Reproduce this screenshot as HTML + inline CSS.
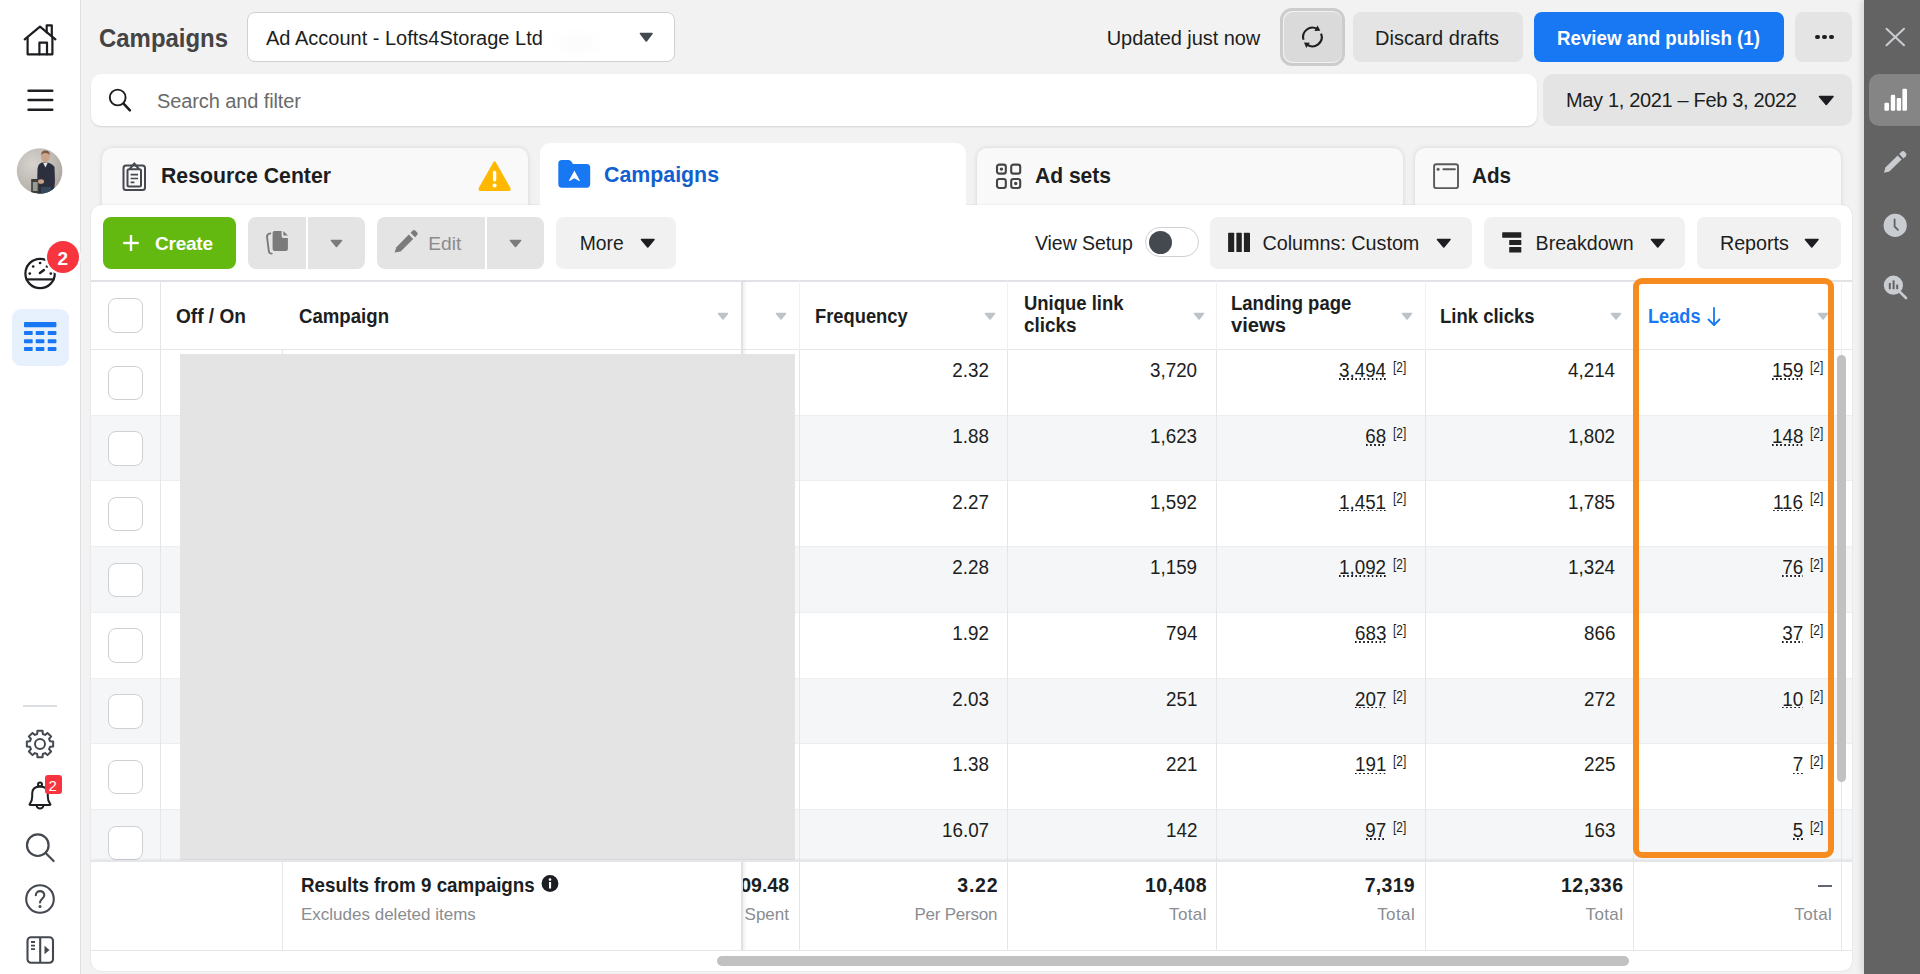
<!DOCTYPE html><html><head><meta charset="utf-8"><style>
html,body{margin:0;padding:0;}
body{width:1920px;height:974px;overflow:hidden;position:relative;background:#f2f2f2;font-family:"Liberation Sans",sans-serif;}
.t{position:absolute;white-space:nowrap;}
</style></head><body>
<div style="position:absolute;left:0px;top:0px;width:81px;height:974px;background:#ffffff;border-right:1px solid #dddfe2;box-sizing:border-box;"></div>
<svg style="position:absolute;left:20px;top:20px" width="40" height="40" viewBox="0 0 40 40"><g fill="none" stroke="#1c1e21" stroke-width="2.2" stroke-linejoin="round" stroke-linecap="round"><path d="M4.7 19.4 L20 6.7 L35.4 19.4"/><path d="M7.6 18 V34.3 H32.4 V18"/><path d="M19.4 34.3 V22.7 H27 V34.3"/><path d="M26.7 12.5 V5.4 H31.8 V16.5"/></g></svg>
<svg style="position:absolute;left:24px;top:86px" width="32" height="28" viewBox="0 0 32 28"><g stroke="#1c1e21" stroke-width="2.6" stroke-linecap="round"><path d="M4.6 4.7 H28.2"/><path d="M4.6 14 H28.2"/><path d="M4.6 23.8 H28.2"/></g></svg>
<svg style="position:absolute;left:16px;top:147px" width="48" height="48" viewBox="0 0 48 48"><defs><clipPath id="avc"><circle cx="23.6" cy="24" r="22.8"/></clipPath><radialGradient id="avg" cx="0.35" cy="0.35" r="0.8"><stop offset="0" stop-color="#d6d2cd"/><stop offset="0.6" stop-color="#bcb7b1"/><stop offset="1" stop-color="#a39d97"/></radialGradient></defs><g clip-path="url(#avc)"><rect width="48" height="48" fill="url(#avg)"/><path d="M21 48 L21.5 22 Q22 15.5 28 15.2 Q35.5 15.2 38.5 20 L39 34 Q38.5 42 37 48 Z" fill="#2c2f3d"/><path d="M27 15.8 L29.5 20.5 L31.8 15.6 Z" fill="#e6e6e6"/><ellipse cx="29.4" cy="9.6" rx="4.3" ry="5.6" fill="#c9a48a"/><path d="M25 8 Q25.5 3.2 29.5 3.4 Q33.8 3.4 33.8 8 Q32 5.8 29.4 6 Q26.8 5.8 25 8 Z" fill="#7b5a44"/><rect x="15.2" y="32" width="8" height="14" fill="#3a3d3a"/><rect x="16.8" y="35" width="4.8" height="9" fill="#9a9a94"/><ellipse cx="25" cy="34.5" rx="3" ry="2.3" fill="#c9a48a"/><rect x="25" y="40" width="10" height="8" fill="#34495e"/></g></svg>
<svg style="position:absolute;left:20px;top:253px" width="40" height="40" viewBox="0 0 40 40"><g fill="none" stroke="#1c1e21" stroke-width="2.2"><circle cx="20.1" cy="20.5" r="14.7"/><path d="M5.8 26.4 H34.4"/><path d="M19.9 20 L23.9 17" stroke-linecap="round" stroke-width="2.4"/></g><g fill="#1c1e21"><circle cx="9.8" cy="20.6" r="1.35"/><circle cx="13.2" cy="13.5" r="1.35"/><circle cx="20.1" cy="10" r="1.35"/><circle cx="27" cy="13.5" r="1.35"/><circle cx="30.8" cy="20.6" r="1.35"/></g></svg>
<div style="position:absolute;left:46.8px;top:241.2px;width:32px;height:32px;border-radius:50%;background:#f8353f;box-shadow:0 0 0 2px #fff;"></div>
<div class="t" style="left:57.5px;top:249.42px;font-size:19px;line-height:19px;font-weight:700;color:#ffffff;">2</div>
<div style="position:absolute;left:12px;top:309px;width:57px;height:57px;background:#e7f0fd;border-radius:9px;"></div>
<svg style="position:absolute;left:24px;top:322px" width="33" height="30" viewBox="0 0 33 30"><g fill="#1877f2"><rect x="0" y="0" width="32.4" height="5.2" rx="1"/><rect x="0" y="9" width="8.7" height="4.1" rx="0.8"/><rect x="11.7" y="9" width="8.7" height="4.1" rx="0.8"/><rect x="23.7" y="9" width="8.7" height="4.1" rx="0.8"/><rect x="0" y="17.2" width="8.7" height="4.1" rx="0.8"/><rect x="11.7" y="17.2" width="8.7" height="4.1" rx="0.8"/><rect x="23.7" y="17.2" width="8.7" height="4.1" rx="0.8"/><rect x="0" y="25" width="8.7" height="4.1" rx="0.8"/><rect x="11.7" y="25" width="8.7" height="4.1" rx="0.8"/><rect x="23.7" y="25" width="8.7" height="4.1" rx="0.8"/></g></svg>
<div style="position:absolute;left:23px;top:705px;width:34px;height:2px;background:#dadde1;"></div>
<svg style="position:absolute;left:20px;top:724px" width="40" height="40" viewBox="0 0 40 40"><g fill="none" stroke="#444950" stroke-width="2" stroke-linejoin="round"><path d="M17.22 9.98 L17.44 6.85 L22.56 6.85 L22.78 9.98 L25.12 10.95 L27.49 8.89 L31.11 12.51 L29.05 14.88 L30.02 17.22 L33.15 17.44 L33.15 22.56 L30.02 22.78 L29.05 25.12 L31.11 27.49 L27.49 31.11 L25.12 29.05 L22.78 30.02 L22.56 33.15 L17.44 33.15 L17.22 30.02 L14.88 29.05 L12.51 31.11 L8.89 27.49 L10.95 25.12 L9.98 22.78 L6.85 22.56 L6.85 17.44 L9.98 17.22 L10.95 14.88 L8.89 12.51 L12.51 8.89 L14.88 10.95 Z"/><circle cx="20" cy="20" r="5"/></g></svg>
<svg style="position:absolute;left:20px;top:776px" width="40" height="40" viewBox="0 0 40 40"><g fill="none" stroke="#1c1e21" stroke-width="2" stroke-linejoin="round"><path d="M10 27.6 Q12.2 25 12.2 20.5 L12.2 17.6 Q12.2 10.6 20 10.6 Q27.8 10.6 27.8 17.6 L27.8 20.5 Q27.8 25 30 27.6 Q31.2 29 29.4 29 L10.6 29 Q8.8 29 10 27.6 Z"/><path d="M16.6 29.2 A3.4 3.4 0 0 0 23.4 29.2"/><circle cx="20" cy="8.6" r="2"/></g></svg>
<div style="position:absolute;left:45px;top:774.5px;width:16.5px;height:19.5px;background:#f8353f;border-radius:3px;"></div>
<div class="t" style="left:48.6px;top:777.60px;font-size:15px;line-height:15px;color:#ffffff;">2</div>
<svg style="position:absolute;left:20px;top:828px" width="40" height="40" viewBox="0 0 40 40"><g fill="none" stroke="#444950" stroke-width="2.2" stroke-linecap="round"><circle cx="17.8" cy="17.2" r="10.8"/><path d="M25.6 25 L33.6 33"/></g></svg>
<svg style="position:absolute;left:20px;top:879px" width="40" height="40" viewBox="0 0 40 40"><g fill="none" stroke="#444950" stroke-width="2.1"><circle cx="20" cy="20" r="13.8"/><path d="M15.8 16.3 C15.8 10.8 24.3 10.8 24.3 16.2 C24.3 19.6 20 19.8 20 23.4" stroke-linecap="round"/></g><circle cx="20" cy="27.6" r="1.5" fill="#444950"/></svg>
<svg style="position:absolute;left:20px;top:930px" width="40" height="40" viewBox="0 0 40 40"><g fill="none" stroke="#444950" stroke-width="2.1"><rect x="7.5" y="7.3" width="25.5" height="25.5" rx="3.5"/><path d="M20.2 7.3 V32.8"/><path d="M11 12 H15 M11 15.6 H15 M11 19.2 H15" stroke-width="1.8"/></g><path d="M24.5 15.7 L29.5 20 L24.5 24.3 Z" fill="#444950"/></svg>
<div class="t" style="left:99px;top:24.79px;font-size:26px;line-height:26px;font-weight:700;color:#444444;transform:scaleX(0.9207);transform-origin:left center;">Campaigns</div>
<div style="position:absolute;left:247px;top:12px;width:428px;height:49.5px;background:#fff;border:1px solid #ced0d4;border-radius:8px;box-sizing:border-box;"></div>
<div class="t" style="left:266px;top:28.07px;font-size:20px;line-height:20px;color:#1c1e21;">Ad Account - Lofts4Storage Ltd</div>
<div style="position:absolute;left:548px;top:26px;width:60px;height:34px;border-radius:50%;background:radial-gradient(ellipse,#fbfbfb 0%,rgba(255,255,255,0) 70%);"></div>
<svg style="position:absolute;left:638.75px;top:32px" width="14.5" height="10.5" viewBox="0 0 14.5 10.5"><path d="M1.5 1.5 L13.0 1.5 L7.25 9.0 Z" fill="#444950" stroke="#444950" stroke-width="1.6" stroke-linejoin="round"/></svg>
<div class="t" style="left:1106.7px;top:28.27px;font-size:20px;line-height:20px;color:#1c1e21;letter-spacing:-0.064px;">Updated just now</div>
<div style="position:absolute;left:1280px;top:7.5px;width:65px;height:58.5px;border:3px solid #cccccc;border-radius:12px;box-sizing:border-box;background:#f2f2f2;"></div>
<div style="position:absolute;left:1283.5px;top:11.5px;width:58.0px;height:50.5px;background:#dadada;border-radius:9px;"></div>
<svg style="position:absolute;left:1297px;top:22px" width="31" height="31" viewBox="0 0 31 31"><g fill="none" stroke="#1c1e21" stroke-width="2.1"><path d="M6.51 17.72 A9.3 9.3 0 0 1 20.05 6.95"/><path d="M24.08 11.67 A9.3 9.3 0 0 1 10.07 22.62"/></g><path d="M23.32 8.84 L20.53 3.59 L17.38 9.04 Z M6.97 20.45 L9.29 25.92 L12.90 20.76 Z" fill="#1c1e21"/></svg>
<div style="position:absolute;left:1353px;top:12px;width:169.5999999999999px;height:50px;background:#e4e4e4;border-radius:8px;"></div>
<div class="t" style="left:1375px;top:28.27px;font-size:20px;line-height:20px;color:#1c1e21;letter-spacing:0.048px;">Discard drafts</div>
<div style="position:absolute;left:1534px;top:12px;width:249.70000000000005px;height:50px;background:#1877f2;border-radius:8px;"></div>
<div class="t" style="left:1557px;top:28.19px;font-size:20.1px;line-height:20.1px;font-weight:700;color:#ffffff;transform:scaleX(0.9325);transform-origin:left center;">Review and publish (1)</div>
<div style="position:absolute;left:1795px;top:12px;width:57px;height:50px;background:#e4e4e4;border-radius:8px;"></div>
<div style="position:absolute;left:1815px;top:34.5px;width:4.6px;height:4.6px;border-radius:50%;background:#1c1e21;box-shadow:7px 0 0 #1c1e21,14px 0 0 #1c1e21"></div>
<div style="position:absolute;left:91px;top:74px;width:1446px;height:52px;background:#fff;border-radius:10px;box-shadow:0 1px 2px rgba(0,0,0,0.12);"></div>
<svg style="position:absolute;left:104px;top:84px" width="32" height="32" viewBox="0 0 32 32"><g fill="none" stroke="#1c1e21" stroke-linecap="round"><circle cx="13.7" cy="13.5" r="7.9" stroke-width="1.9"/><path d="M19.6 19.6 L25.9 26.4" stroke-width="2.5"/></g></svg>
<div class="t" style="left:157px;top:90.57px;font-size:20px;line-height:20px;color:#6a6a6a;letter-spacing:-0.104px;">Search and filter</div>
<div style="position:absolute;left:1542.5px;top:74px;width:309.5px;height:51.5px;background:#e4e4e4;border-radius:10px;"></div>
<div class="t" style="left:1566px;top:89.87px;font-size:20px;line-height:20px;color:#1c1e21;letter-spacing:-0.339px;">May 1, 2021 – Feb 3, 2022</div>
<svg style="position:absolute;left:1817.75px;top:95.3px" width="16.5" height="11" viewBox="0 0 16.5 11"><path d="M1.5 1.5 L15.0 1.5 L8.25 9.5 Z" fill="#1c1e21" stroke="#1c1e21" stroke-width="1.6" stroke-linejoin="round"/></svg>
<div style="position:absolute;left:1864px;top:0px;width:56px;height:974px;background:#636363;box-shadow:-3px 0 6px rgba(0,0,0,0.10);"></div>
<svg style="position:absolute;left:1883px;top:25px" width="24" height="24" viewBox="0 0 24 24"><g stroke="#c9ccd1" stroke-width="2" stroke-linecap="round"><path d="M3.5 3.7 L21 20.3"/><path d="M21 3.7 L3.5 20.3"/></g></svg>
<div style="position:absolute;left:1869px;top:74px;width:61px;height:51.5px;background:#858585;border-radius:10px;"></div>
<svg style="position:absolute;left:1880px;top:84px" width="32" height="32" viewBox="0 0 32 32"><g fill="#ffffff"><rect x="4.4" y="18.8" width="4.6" height="8" rx="1.2"/><rect x="10.8" y="10.8" width="4.4" height="16" rx="1.2"/><rect x="16.7" y="14" width="4.4" height="12.8" rx="1.2"/><rect x="22.4" y="4.8" width="4.6" height="22" rx="1.2"/></g></svg>
<svg style="position:absolute;left:1880px;top:146px" width="32" height="32" viewBox="0 0 32 32"><g fill="#c9ccd1"><path d="M4 26.8 L5.4 21.6 L17.6 9.6 L21.6 13.6 L9.4 25.6 Z"/><path d="M19.2 8 L21.4 5.8 Q23 4.4 24.6 5.8 L25.8 7 Q27.2 8.6 25.8 10.2 L23.4 12.4 Z"/></g></svg>
<svg style="position:absolute;left:1880px;top:210px" width="32" height="32" viewBox="0 0 32 32"><circle cx="15.2" cy="15.4" r="11.6" fill="#c9ccd1"/><path d="M14.6 9.5 V16.5 L18 19.8" fill="none" stroke="#636363" stroke-width="1.8" stroke-linecap="round"/></svg>
<svg style="position:absolute;left:1880px;top:271px" width="32" height="32" viewBox="0 0 32 32"><circle cx="13.4" cy="14.2" r="9.6" fill="#c9ccd1"/><path d="M19.8 20.8 L26 27" stroke="#c9ccd1" stroke-width="2.6" stroke-linecap="round"/><g fill="#636363"><rect x="8.8" y="12" width="2" height="6.2"/><rect x="12.6" y="9.4" width="2" height="8.8"/><rect x="16.2" y="13.6" width="2" height="4.6"/></g></svg>
<div style="position:absolute;left:102px;top:148px;width:426px;height:67px;background:#f9f9f9;border-radius:10px 10px 0 0;box-shadow:0 0 5px rgba(0,0,0,0.12);"></div>
<div style="position:absolute;left:977px;top:148px;width:426px;height:67px;background:#f9f9f9;border-radius:10px 10px 0 0;box-shadow:0 0 5px rgba(0,0,0,0.12);"></div>
<div style="position:absolute;left:1415px;top:148px;width:426px;height:67px;background:#f9f9f9;border-radius:10px 10px 0 0;box-shadow:0 0 5px rgba(0,0,0,0.12);"></div>
<div style="position:absolute;left:91px;top:205px;width:1761px;height:766px;background:#ffffff;border-radius:10px;box-shadow:0 0 2px rgba(0,0,0,0.12);"></div>
<div style="position:absolute;left:540px;top:143px;width:426px;height:72px;background:#ffffff;border-radius:10px 10px 0 0;"></div>
<svg style="position:absolute;left:118px;top:158px" width="32" height="36" viewBox="0 0 32 36"><g fill="none" stroke="#444950" stroke-width="2"><rect x="5.5" y="7.5" width="21.5" height="24.5" rx="2.5"/><rect x="9.5" y="11.3" width="13.5" height="17.2" rx="1.5"/><path d="M11.7 11 L16.3 5.6 L20.9 11"/></g><g stroke="#444950" stroke-width="1.7"><path d="M12.6 16.6 H20 M12.6 20.5 H20 M12.6 24.3 H16.4"/></g></svg>
<div class="t" style="left:160.8px;top:165.17px;font-size:22.6px;line-height:22.6px;font-weight:700;color:#1c1e21;transform:scaleX(0.9403);transform-origin:left center;">Resource Center</div>
<svg style="position:absolute;left:476px;top:158px" width="37" height="36" viewBox="0 0 37 36"><path d="M18.6 4.6 L33.2 30.4 Q33.8 31.8 32.3 31.8 L4.9 31.8 Q3.4 31.8 4 30.4 Z" fill="#ffb800" stroke="#ffb800" stroke-width="2.6" stroke-linejoin="round"/><rect x="16.9" y="12.8" width="3.4" height="10.6" rx="1.7" fill="#fff"/><circle cx="18.6" cy="27.4" r="2" fill="#fff"/></svg>
<svg style="position:absolute;left:556px;top:157px" width="37" height="34" viewBox="0 0 37 34"><path d="M2.3 6.5 Q2.3 2.9 5.9 2.9 L12.6 2.9 Q14.4 2.9 15.4 4.4 L17 6.9 L30.6 6.9 Q34.2 6.9 34.2 10.5 L34.2 27.1 Q34.2 30.7 30.6 30.7 L5.9 30.7 Q2.3 30.7 2.3 27.1 Z" fill="#1877f2"/><path d="M18.4 13.6 L23.8 23.6 Q23.9 24.2 23.2 23.9 L18.4 21.2 L13.6 23.9 Q12.9 24.2 13 23.6 Z" fill="#fff"/></svg>
<div class="t" style="left:603.5px;top:162.70px;font-size:22.8px;line-height:22.8px;font-weight:700;color:#1160cf;transform:scaleX(0.9361);transform-origin:left center;">Campaigns</div>
<svg style="position:absolute;left:993px;top:160px" width="32" height="32" viewBox="0 0 32 32"><g fill="none" stroke="#454545" stroke-width="2.1"><rect x="4" y="4.6" width="8.8" height="9" rx="2.2"/><rect x="18.2" y="4.6" width="9" height="9" rx="2.2"/><rect x="4" y="19" width="8.8" height="9" rx="2.2"/><rect x="18.2" y="19" width="9" height="9" rx="2.2"/></g><g fill="#454545"><circle cx="8.4" cy="9.1" r="1.7"/><circle cx="22.7" cy="23.5" r="1.7"/></g></svg>
<div class="t" style="left:1035px;top:165.17px;font-size:22.6px;line-height:22.6px;font-weight:700;color:#1c1e21;transform:scaleX(0.9313);transform-origin:left center;">Ad sets</div>
<svg style="position:absolute;left:1430px;top:160px" width="32" height="32" viewBox="0 0 32 32"><rect x="4.1" y="4.2" width="23.9" height="23.9" rx="2.2" fill="none" stroke="#5a5a5a" stroke-width="1.9"/><path d="M13.4 9.2 H24.9" stroke="#5a5a5a" stroke-width="1.9" stroke-linecap="round"/><circle cx="8.1" cy="9.2" r="1.5" fill="#5a5a5a"/></svg>
<div class="t" style="left:1472px;top:165.17px;font-size:22.6px;line-height:22.6px;font-weight:700;color:#1c1e21;transform:scaleX(0.9140);transform-origin:left center;">Ads</div>
<div style="position:absolute;left:103px;top:216.5px;width:133px;height:52.0px;background:#63b90f;border-radius:8px;"></div>
<svg style="position:absolute;left:121px;top:226px" width="20" height="34" viewBox="0 0 20 34"><g stroke="#fff" stroke-width="2.4"><path d="M2.2 17 H17.8"/><path d="M10 9 V25"/></g></svg>
<div class="t" style="left:155px;top:233.92px;font-size:19px;line-height:19px;font-weight:700;color:#ffffff;letter-spacing:-0.225px;">Create</div>
<div style="position:absolute;left:248px;top:216.5px;width:57.5px;height:52.0px;background:#e4e4e4;border-radius:8px 0 0 8px;"></div>
<div style="position:absolute;left:307.5px;top:216.5px;width:57.5px;height:52.0px;background:#e4e4e4;border-radius:0 8px 8px 0;"></div>
<svg style="position:absolute;left:262px;top:228px" width="30" height="28" viewBox="0 0 30 28"><path d="M8.4 5.4 Q5.2 5.8 5 8.6 L6.9 23.6 Q7.3 25.6 9.8 25.6" fill="none" stroke="#7b7b7b" stroke-width="1.9" stroke-linecap="round"/><path d="M12.6 3 H19.6 V8 Q19.6 10 21.6 10 H25.9 V21 Q25.9 23 23.9 23 H12.6 Q10.6 23 10.6 21 V5 Q10.6 3 12.6 3 Z" fill="#7b7b7b"/><path d="M21.4 3.1 L25.9 7.6 H21.4 Z" fill="#7b7b7b"/></svg>
<svg style="position:absolute;left:329.5px;top:238.5px" width="13" height="9" viewBox="0 0 13 9"><path d="M1.5 1.5 L11.5 1.5 L6.5 7.5 Z" fill="#7b7b7b" stroke="#7b7b7b" stroke-width="1.6" stroke-linejoin="round"/></svg>
<div style="position:absolute;left:377px;top:216.5px;width:107.5px;height:52.0px;background:#e4e4e4;border-radius:8px 0 0 8px;"></div>
<div style="position:absolute;left:487px;top:216.5px;width:57px;height:52.0px;background:#e4e4e4;border-radius:0 8px 8px 0;"></div>
<svg style="position:absolute;left:392px;top:228px" width="28" height="28" viewBox="0 0 28 28"><g fill="#7b7b7b"><path d="M2.6 24.6 L4.4 19.2 L16.8 6.6 L21.2 11 L8.6 23.4 Z"/><path d="M18.6 4.8 L20.8 2.6 Q22 1.6 23.3 2.6 L25.2 4.6 Q26.2 5.8 25.2 7 L23 9.2 Z"/></g></svg>
<div class="t" style="left:428.3px;top:233.75px;font-size:19.2px;line-height:19.2px;color:#8b8b8b;letter-spacing:-0.021px;">Edit</div>
<svg style="position:absolute;left:509.0px;top:238.5px" width="13" height="9" viewBox="0 0 13 9"><path d="M1.5 1.5 L11.5 1.5 L6.5 7.5 Z" fill="#7b7b7b" stroke="#7b7b7b" stroke-width="1.6" stroke-linejoin="round"/></svg>
<div style="position:absolute;left:556px;top:216.5px;width:120px;height:52.0px;background:#f1f1f1;border-radius:8px;"></div>
<div class="t" style="left:579.7px;top:233.66px;font-size:19.3px;line-height:19.3px;color:#1c1e21;letter-spacing:0.010px;">More</div>
<svg style="position:absolute;left:640.25px;top:237.5px" width="15.5" height="10.5" viewBox="0 0 15.5 10.5"><path d="M1.5 1.5 L14.0 1.5 L7.75 9.0 Z" fill="#1c1e21" stroke="#1c1e21" stroke-width="1.6" stroke-linejoin="round"/></svg>
<div class="t" style="left:1035px;top:234.29px;font-size:19.5px;line-height:19.5px;color:#1c1e21;letter-spacing:-0.063px;">View Setup</div>
<div style="position:absolute;left:1145px;top:227px;width:53.5px;height:30.19999999999999px;background:#fff;border:1px solid #ced0d4;border-radius:16px;box-sizing:border-box;"></div>
<div style="position:absolute;left:1148.7px;top:230.6px;width:23px;height:23px;border-radius:50%;background:#444950;"></div>
<div style="position:absolute;left:1210px;top:216.5px;width:261.5999999999999px;height:52.0px;background:#f1f1f1;border-radius:8px;"></div>
<svg style="position:absolute;left:1226px;top:230px" width="26" height="26" viewBox="0 0 26 26"><g fill="#222222"><rect x="2.1" y="2.7" width="6.1" height="19.3" rx="0.6"/><rect x="10.4" y="2.7" width="5.4" height="19.3" rx="0.6"/><rect x="17.9" y="2.7" width="6.1" height="19.3" rx="0.6"/></g></svg>
<div class="t" style="left:1262.5px;top:234.04px;font-size:19.8px;line-height:19.8px;color:#1c1e21;letter-spacing:-0.025px;">Columns: Custom</div>
<svg style="position:absolute;left:1435.75px;top:237.5px" width="15.5" height="10.5" viewBox="0 0 15.5 10.5"><path d="M1.5 1.5 L14.0 1.5 L7.75 9.0 Z" fill="#1c1e21" stroke="#1c1e21" stroke-width="1.6" stroke-linejoin="round"/></svg>
<div style="position:absolute;left:1484.2px;top:216.5px;width:200.39999999999986px;height:52.0px;background:#f1f1f1;border-radius:8px;"></div>
<svg style="position:absolute;left:1500px;top:230px" width="24" height="26" viewBox="0 0 24 26"><g fill="#222222"><rect x="2.2" y="2.2" width="19.1" height="5.6" rx="0.6"/><rect x="9.2" y="9.9" width="12.1" height="5.1" rx="0.6"/><rect x="9.2" y="17.1" width="12.1" height="5.4" rx="0.6"/></g></svg>
<div class="t" style="left:1535.6px;top:234.21px;font-size:19.6px;line-height:19.6px;color:#1c1e21;">Breakdown</div>
<svg style="position:absolute;left:1649.55px;top:237.5px" width="15.5" height="10.5" viewBox="0 0 15.5 10.5"><path d="M1.5 1.5 L14.0 1.5 L7.75 9.0 Z" fill="#1c1e21" stroke="#1c1e21" stroke-width="1.6" stroke-linejoin="round"/></svg>
<div style="position:absolute;left:1697px;top:216.5px;width:143.79999999999995px;height:52.0px;background:#f1f1f1;border-radius:8px;"></div>
<div class="t" style="left:1720px;top:234.12px;font-size:19.7px;line-height:19.7px;color:#1c1e21;letter-spacing:-0.026px;">Reports</div>
<svg style="position:absolute;left:1804.45px;top:237.5px" width="15.5" height="10.5" viewBox="0 0 15.5 10.5"><path d="M1.5 1.5 L14.0 1.5 L7.75 9.0 Z" fill="#1c1e21" stroke="#1c1e21" stroke-width="1.6" stroke-linejoin="round"/></svg>
<div style="position:absolute;left:91px;top:280px;width:1761px;height:1.5px;background:#e0e2e5;"></div>
<div style="position:absolute;left:91px;top:349px;width:1761px;height:1px;background:#e4e6e9;"></div>
<div style="position:absolute;left:91px;top:415.73px;width:1761px;height:65.23000000000002px;background:#f5f6f7;"></div>
<div style="position:absolute;left:91px;top:414.73px;width:1761px;height:1.0px;background:#eceef0;"></div>
<div style="position:absolute;left:91px;top:480.46000000000004px;width:1761px;height:1.0px;background:#eceef0;"></div>
<div style="position:absolute;left:91px;top:547.19px;width:1761px;height:65.23000000000002px;background:#f5f6f7;"></div>
<div style="position:absolute;left:91px;top:546.19px;width:1761px;height:1.0px;background:#eceef0;"></div>
<div style="position:absolute;left:91px;top:611.9200000000001px;width:1761px;height:1.0px;background:#eceef0;"></div>
<div style="position:absolute;left:91px;top:678.6500000000001px;width:1761px;height:65.23000000000002px;background:#f5f6f7;"></div>
<div style="position:absolute;left:91px;top:677.6500000000001px;width:1761px;height:1.0px;background:#eceef0;"></div>
<div style="position:absolute;left:91px;top:743.38px;width:1761px;height:1.0px;background:#eceef0;"></div>
<div style="position:absolute;left:91px;top:810.11px;width:1761px;height:50.889999999999986px;background:#f5f6f7;"></div>
<div style="position:absolute;left:91px;top:809.11px;width:1761px;height:1.0px;background:#eceef0;"></div>
<div style="position:absolute;left:159.9px;top:281px;width:1.0px;height:580px;background:#e4e6e9;"></div>
<div style="position:absolute;left:281.9px;top:350px;width:1.0px;height:511px;background:#e4e6e9;"></div>
<div style="position:absolute;left:741px;top:281px;width:2px;height:580px;background:#dfe1e4;"></div>
<div style="position:absolute;left:743px;top:281px;width:4px;height:580px;background:linear-gradient(to right,rgba(0,0,0,0.06),rgba(0,0,0,0));"></div>
<div style="position:absolute;left:798.8px;top:281px;width:1.0px;height:69px;background:#f0f1f3;"></div>
<div style="position:absolute;left:798.8px;top:350px;width:1.0px;height:511px;background:#e4e6e9;"></div>
<div style="position:absolute;left:1006.5px;top:281px;width:1.0px;height:69px;background:#f0f1f3;"></div>
<div style="position:absolute;left:1006.5px;top:350px;width:1.0px;height:511px;background:#e4e6e9;"></div>
<div style="position:absolute;left:1216.0px;top:281px;width:1.0px;height:69px;background:#f0f1f3;"></div>
<div style="position:absolute;left:1216.0px;top:350px;width:1.0px;height:511px;background:#e4e6e9;"></div>
<div style="position:absolute;left:1424.5px;top:281px;width:1.0px;height:69px;background:#f0f1f3;"></div>
<div style="position:absolute;left:1424.5px;top:350px;width:1.0px;height:511px;background:#e4e6e9;"></div>
<div style="position:absolute;left:1632.5px;top:281px;width:1.0px;height:69px;background:#f0f1f3;"></div>
<div style="position:absolute;left:1632.5px;top:350px;width:1.0px;height:511px;background:#e4e6e9;"></div>
<div style="position:absolute;left:1841.0px;top:281px;width:1.0px;height:69px;background:#f0f1f3;"></div>
<div style="position:absolute;left:1841.0px;top:350px;width:1.0px;height:511px;background:#e4e6e9;"></div>
<div style="position:absolute;left:108px;top:298.4px;width:34.5px;height:34.5px;background:#fff;border:1.5px solid #ced0d4;border-radius:8px;box-sizing:border-box;"></div>
<div class="t" style="left:175.5px;top:305.68px;font-size:20.7px;line-height:20.7px;font-weight:700;color:#1c1e21;transform:scaleX(0.9228);transform-origin:left center;">Off / On</div>
<div class="t" style="left:299px;top:305.68px;font-size:20.7px;line-height:20.7px;font-weight:700;color:#1c1e21;transform:scaleX(0.9000);transform-origin:left center;">Campaign</div>
<div class="t" style="left:814.7px;top:305.68px;font-size:20.7px;line-height:20.7px;font-weight:700;color:#1c1e21;transform:scaleX(0.8862);transform-origin:left center;">Frequency</div>
<div class="t" style="left:1023.5px;top:293.08px;font-size:20.7px;line-height:20.7px;font-weight:700;color:#1c1e21;transform:scaleX(0.8924);transform-origin:left center;">Unique link</div>
<div class="t" style="left:1023.5px;top:315.48px;font-size:20.7px;line-height:20.7px;font-weight:700;color:#1c1e21;transform:scaleX(0.9130);transform-origin:left center;">clicks</div>
<div class="t" style="left:1231.3px;top:293.08px;font-size:20.7px;line-height:20.7px;font-weight:700;color:#1c1e21;transform:scaleX(0.8945);transform-origin:left center;">Landing page</div>
<div class="t" style="left:1231.3px;top:315.48px;font-size:20.7px;line-height:20.7px;font-weight:700;color:#1c1e21;transform:scaleX(0.9762);transform-origin:left center;">views</div>
<div class="t" style="left:1440.3px;top:305.68px;font-size:20.7px;line-height:20.7px;font-weight:700;color:#1c1e21;transform:scaleX(0.8943);transform-origin:left center;">Link clicks</div>
<div class="t" style="left:1648px;top:305.68px;font-size:20.7px;line-height:20.7px;font-weight:700;color:#1877f2;transform:scaleX(0.8782);transform-origin:left center;">Leads</div>
<svg style="position:absolute;left:1702.5px;top:305px" width="22" height="24" viewBox="0 0 22 24"><g fill="none" stroke="#1877f2" stroke-width="1.8" stroke-linecap="round" stroke-linejoin="round"><path d="M11 3 V20"/><path d="M5.5 14.5 L11 20 L16.5 14.5"/></g></svg>
<svg style="position:absolute;left:716.5px;top:311.7px" width="12" height="8.5" viewBox="0 0 12 8.5"><path d="M1.5 1.5 L10.5 1.5 L6.0 7.0 Z" fill="#bec3c9" stroke="#bec3c9" stroke-width="1.6" stroke-linejoin="round"/></svg>
<svg style="position:absolute;left:775.0px;top:311.7px" width="12" height="8.5" viewBox="0 0 12 8.5"><path d="M1.5 1.5 L10.5 1.5 L6.0 7.0 Z" fill="#bec3c9" stroke="#bec3c9" stroke-width="1.6" stroke-linejoin="round"/></svg>
<svg style="position:absolute;left:984.2px;top:311.7px" width="12" height="8.5" viewBox="0 0 12 8.5"><path d="M1.5 1.5 L10.5 1.5 L6.0 7.0 Z" fill="#bec3c9" stroke="#bec3c9" stroke-width="1.6" stroke-linejoin="round"/></svg>
<svg style="position:absolute;left:1193.0px;top:311.7px" width="12" height="8.5" viewBox="0 0 12 8.5"><path d="M1.5 1.5 L10.5 1.5 L6.0 7.0 Z" fill="#bec3c9" stroke="#bec3c9" stroke-width="1.6" stroke-linejoin="round"/></svg>
<svg style="position:absolute;left:1401.0px;top:311.7px" width="12" height="8.5" viewBox="0 0 12 8.5"><path d="M1.5 1.5 L10.5 1.5 L6.0 7.0 Z" fill="#bec3c9" stroke="#bec3c9" stroke-width="1.6" stroke-linejoin="round"/></svg>
<svg style="position:absolute;left:1609.7px;top:311.7px" width="12" height="8.5" viewBox="0 0 12 8.5"><path d="M1.5 1.5 L10.5 1.5 L6.0 7.0 Z" fill="#bec3c9" stroke="#bec3c9" stroke-width="1.6" stroke-linejoin="round"/></svg>
<svg style="position:absolute;left:1817.4px;top:311.7px" width="12" height="8.5" viewBox="0 0 12 8.5"><path d="M1.5 1.5 L10.5 1.5 L6.0 7.0 Z" fill="#bec3c9" stroke="#bec3c9" stroke-width="1.6" stroke-linejoin="round"/></svg>
<div style="position:absolute;left:108px;top:365.5px;width:34.5px;height:34.5px;background:#fff;border:1.5px solid #ced0d4;border-radius:8px;box-sizing:border-box;"></div>
<div class="t" style="right:930.70px;top:360.07px;font-size:20px;line-height:20px;color:#1c1e21;transform:scaleX(0.9400);transform-origin:right center;">2.32</div>
<div class="t" style="right:722.60px;top:360.07px;font-size:20px;line-height:20px;color:#1c1e21;transform:scaleX(0.9400);transform-origin:right center;">3,720</div>
<div class="t" style="right:533.50px;top:360.07px;font-size:20px;line-height:20px;color:#1c1e21;transform:scaleX(0.9400);transform-origin:right center;">3,494</div>
<div style="position:absolute;left:1339.44125px;top:378.2px;width:47.05874999999992px;height:1.6000000000000227px;background-image:linear-gradient(to right,#1c1e21 40%,rgba(0,0,0,0) 40%);background-size:4.1px 1.6px;"></div>
<div class="t" style="left:1392.8px;top:359.85px;font-size:14px;line-height:14px;color:#1c1e21;transform:scaleX(0.8482);transform-origin:left center;">[2]</div>
<div class="t" style="right:305.00px;top:360.07px;font-size:20px;line-height:20px;color:#1c1e21;transform:scaleX(0.9400);transform-origin:right center;">4,214</div>
<div class="t" style="right:116.70px;top:360.07px;font-size:20px;line-height:20px;color:#1c1e21;transform:scaleX(0.9400);transform-origin:right center;">159</div>
<div style="position:absolute;left:1771.9275px;top:378.2px;width:31.372499999999945px;height:1.6000000000000227px;background-image:linear-gradient(to right,#1c1e21 40%,rgba(0,0,0,0) 40%);background-size:4.1px 1.6px;"></div>
<div class="t" style="left:1809.8px;top:359.85px;font-size:14px;line-height:14px;color:#1c1e21;transform:scaleX(0.8482);transform-origin:left center;">[2]</div>
<div style="position:absolute;left:108px;top:431.23px;width:34.5px;height:34.5px;background:#fff;border:1.5px solid #ced0d4;border-radius:8px;box-sizing:border-box;"></div>
<div class="t" style="right:930.70px;top:425.80px;font-size:20px;line-height:20px;color:#1c1e21;transform:scaleX(0.9400);transform-origin:right center;">1.88</div>
<div class="t" style="right:722.60px;top:425.80px;font-size:20px;line-height:20px;color:#1c1e21;transform:scaleX(0.9400);transform-origin:right center;">1,623</div>
<div class="t" style="right:533.50px;top:425.80px;font-size:20px;line-height:20px;color:#1c1e21;transform:scaleX(0.9400);transform-origin:right center;">68</div>
<div style="position:absolute;left:1365.585px;top:443.93px;width:20.914999999999964px;height:1.6000000000000227px;background-image:linear-gradient(to right,#1c1e21 40%,rgba(0,0,0,0) 40%);background-size:4.1px 1.6px;"></div>
<div class="t" style="left:1392.8px;top:425.58px;font-size:14px;line-height:14px;color:#1c1e21;transform:scaleX(0.8482);transform-origin:left center;">[2]</div>
<div class="t" style="right:305.00px;top:425.80px;font-size:20px;line-height:20px;color:#1c1e21;transform:scaleX(0.9400);transform-origin:right center;">1,802</div>
<div class="t" style="right:116.70px;top:425.80px;font-size:20px;line-height:20px;color:#1c1e21;transform:scaleX(0.9400);transform-origin:right center;">148</div>
<div style="position:absolute;left:1771.9275px;top:443.93px;width:31.372499999999945px;height:1.6000000000000227px;background-image:linear-gradient(to right,#1c1e21 40%,rgba(0,0,0,0) 40%);background-size:4.1px 1.6px;"></div>
<div class="t" style="left:1809.8px;top:425.58px;font-size:14px;line-height:14px;color:#1c1e21;transform:scaleX(0.8482);transform-origin:left center;">[2]</div>
<div style="position:absolute;left:108px;top:496.96000000000004px;width:34.5px;height:34.5px;background:#fff;border:1.5px solid #ced0d4;border-radius:8px;box-sizing:border-box;"></div>
<div class="t" style="right:930.70px;top:491.53px;font-size:20px;line-height:20px;color:#1c1e21;transform:scaleX(0.9400);transform-origin:right center;">2.27</div>
<div class="t" style="right:722.60px;top:491.53px;font-size:20px;line-height:20px;color:#1c1e21;transform:scaleX(0.9400);transform-origin:right center;">1,592</div>
<div class="t" style="right:533.50px;top:491.53px;font-size:20px;line-height:20px;color:#1c1e21;transform:scaleX(0.9400);transform-origin:right center;">1,451</div>
<div style="position:absolute;left:1339.44125px;top:509.66px;width:47.05874999999992px;height:1.6000000000000227px;background-image:linear-gradient(to right,#1c1e21 40%,rgba(0,0,0,0) 40%);background-size:4.1px 1.6px;"></div>
<div class="t" style="left:1392.8px;top:491.31px;font-size:14px;line-height:14px;color:#1c1e21;transform:scaleX(0.8482);transform-origin:left center;">[2]</div>
<div class="t" style="right:305.00px;top:491.53px;font-size:20px;line-height:20px;color:#1c1e21;transform:scaleX(0.9400);transform-origin:right center;">1,785</div>
<div class="t" style="right:116.70px;top:491.53px;font-size:20px;line-height:20px;color:#1c1e21;transform:scaleX(0.9400);transform-origin:right center;">116</div>
<div style="position:absolute;left:1773.3228125px;top:509.66px;width:29.9771874999999px;height:1.6000000000000227px;background-image:linear-gradient(to right,#1c1e21 40%,rgba(0,0,0,0) 40%);background-size:4.1px 1.6px;"></div>
<div class="t" style="left:1809.8px;top:491.31px;font-size:14px;line-height:14px;color:#1c1e21;transform:scaleX(0.8482);transform-origin:left center;">[2]</div>
<div style="position:absolute;left:108px;top:562.69px;width:34.5px;height:34.5px;background:#fff;border:1.5px solid #ced0d4;border-radius:8px;box-sizing:border-box;"></div>
<div class="t" style="right:930.70px;top:557.26px;font-size:20px;line-height:20px;color:#1c1e21;transform:scaleX(0.9400);transform-origin:right center;">2.28</div>
<div class="t" style="right:722.60px;top:557.26px;font-size:20px;line-height:20px;color:#1c1e21;transform:scaleX(0.9400);transform-origin:right center;">1,159</div>
<div class="t" style="right:533.50px;top:557.26px;font-size:20px;line-height:20px;color:#1c1e21;transform:scaleX(0.9400);transform-origin:right center;">1,092</div>
<div style="position:absolute;left:1339.44125px;top:575.3900000000001px;width:47.05874999999992px;height:1.6000000000000227px;background-image:linear-gradient(to right,#1c1e21 40%,rgba(0,0,0,0) 40%);background-size:4.1px 1.6px;"></div>
<div class="t" style="left:1392.8px;top:557.04px;font-size:14px;line-height:14px;color:#1c1e21;transform:scaleX(0.8482);transform-origin:left center;">[2]</div>
<div class="t" style="right:305.00px;top:557.26px;font-size:20px;line-height:20px;color:#1c1e21;transform:scaleX(0.9400);transform-origin:right center;">1,324</div>
<div class="t" style="right:116.70px;top:557.26px;font-size:20px;line-height:20px;color:#1c1e21;transform:scaleX(0.9400);transform-origin:right center;">76</div>
<div style="position:absolute;left:1782.385px;top:575.3900000000001px;width:20.914999999999964px;height:1.6000000000000227px;background-image:linear-gradient(to right,#1c1e21 40%,rgba(0,0,0,0) 40%);background-size:4.1px 1.6px;"></div>
<div class="t" style="left:1809.8px;top:557.04px;font-size:14px;line-height:14px;color:#1c1e21;transform:scaleX(0.8482);transform-origin:left center;">[2]</div>
<div style="position:absolute;left:108px;top:628.4200000000001px;width:34.5px;height:34.5px;background:#fff;border:1.5px solid #ced0d4;border-radius:8px;box-sizing:border-box;"></div>
<div class="t" style="right:930.70px;top:622.99px;font-size:20px;line-height:20px;color:#1c1e21;transform:scaleX(0.9400);transform-origin:right center;">1.92</div>
<div class="t" style="right:722.60px;top:622.99px;font-size:20px;line-height:20px;color:#1c1e21;transform:scaleX(0.9400);transform-origin:right center;">794</div>
<div class="t" style="right:533.50px;top:622.99px;font-size:20px;line-height:20px;color:#1c1e21;transform:scaleX(0.9400);transform-origin:right center;">683</div>
<div style="position:absolute;left:1355.1275px;top:641.1200000000001px;width:31.372499999999945px;height:1.6000000000000227px;background-image:linear-gradient(to right,#1c1e21 40%,rgba(0,0,0,0) 40%);background-size:4.1px 1.6px;"></div>
<div class="t" style="left:1392.8px;top:622.77px;font-size:14px;line-height:14px;color:#1c1e21;transform:scaleX(0.8482);transform-origin:left center;">[2]</div>
<div class="t" style="right:305.00px;top:622.99px;font-size:20px;line-height:20px;color:#1c1e21;transform:scaleX(0.9400);transform-origin:right center;">866</div>
<div class="t" style="right:116.70px;top:622.99px;font-size:20px;line-height:20px;color:#1c1e21;transform:scaleX(0.9400);transform-origin:right center;">37</div>
<div style="position:absolute;left:1782.385px;top:641.1200000000001px;width:20.914999999999964px;height:1.6000000000000227px;background-image:linear-gradient(to right,#1c1e21 40%,rgba(0,0,0,0) 40%);background-size:4.1px 1.6px;"></div>
<div class="t" style="left:1809.8px;top:622.77px;font-size:14px;line-height:14px;color:#1c1e21;transform:scaleX(0.8482);transform-origin:left center;">[2]</div>
<div style="position:absolute;left:108px;top:694.1500000000001px;width:34.5px;height:34.5px;background:#fff;border:1.5px solid #ced0d4;border-radius:8px;box-sizing:border-box;"></div>
<div class="t" style="right:930.70px;top:688.72px;font-size:20px;line-height:20px;color:#1c1e21;transform:scaleX(0.9400);transform-origin:right center;">2.03</div>
<div class="t" style="right:722.60px;top:688.72px;font-size:20px;line-height:20px;color:#1c1e21;transform:scaleX(0.9400);transform-origin:right center;">251</div>
<div class="t" style="right:533.50px;top:688.72px;font-size:20px;line-height:20px;color:#1c1e21;transform:scaleX(0.9400);transform-origin:right center;">207</div>
<div style="position:absolute;left:1355.1275px;top:706.8500000000001px;width:31.372499999999945px;height:1.6000000000000227px;background-image:linear-gradient(to right,#1c1e21 40%,rgba(0,0,0,0) 40%);background-size:4.1px 1.6px;"></div>
<div class="t" style="left:1392.8px;top:688.50px;font-size:14px;line-height:14px;color:#1c1e21;transform:scaleX(0.8482);transform-origin:left center;">[2]</div>
<div class="t" style="right:305.00px;top:688.72px;font-size:20px;line-height:20px;color:#1c1e21;transform:scaleX(0.9400);transform-origin:right center;">272</div>
<div class="t" style="right:116.70px;top:688.72px;font-size:20px;line-height:20px;color:#1c1e21;transform:scaleX(0.9400);transform-origin:right center;">10</div>
<div style="position:absolute;left:1782.385px;top:706.8500000000001px;width:20.914999999999964px;height:1.6000000000000227px;background-image:linear-gradient(to right,#1c1e21 40%,rgba(0,0,0,0) 40%);background-size:4.1px 1.6px;"></div>
<div class="t" style="left:1809.8px;top:688.50px;font-size:14px;line-height:14px;color:#1c1e21;transform:scaleX(0.8482);transform-origin:left center;">[2]</div>
<div style="position:absolute;left:108px;top:759.88px;width:34.5px;height:34.5px;background:#fff;border:1.5px solid #ced0d4;border-radius:8px;box-sizing:border-box;"></div>
<div class="t" style="right:930.70px;top:754.45px;font-size:20px;line-height:20px;color:#1c1e21;transform:scaleX(0.9400);transform-origin:right center;">1.38</div>
<div class="t" style="right:722.60px;top:754.45px;font-size:20px;line-height:20px;color:#1c1e21;transform:scaleX(0.9400);transform-origin:right center;">221</div>
<div class="t" style="right:533.50px;top:754.45px;font-size:20px;line-height:20px;color:#1c1e21;transform:scaleX(0.9400);transform-origin:right center;">191</div>
<div style="position:absolute;left:1355.1275px;top:772.58px;width:31.372499999999945px;height:1.6000000000000227px;background-image:linear-gradient(to right,#1c1e21 40%,rgba(0,0,0,0) 40%);background-size:4.1px 1.6px;"></div>
<div class="t" style="left:1392.8px;top:754.23px;font-size:14px;line-height:14px;color:#1c1e21;transform:scaleX(0.8482);transform-origin:left center;">[2]</div>
<div class="t" style="right:305.00px;top:754.45px;font-size:20px;line-height:20px;color:#1c1e21;transform:scaleX(0.9400);transform-origin:right center;">225</div>
<div class="t" style="right:116.70px;top:754.45px;font-size:20px;line-height:20px;color:#1c1e21;transform:scaleX(0.9400);transform-origin:right center;">7</div>
<div style="position:absolute;left:1792.8425px;top:772.58px;width:10.457499999999982px;height:1.6000000000000227px;background-image:linear-gradient(to right,#1c1e21 40%,rgba(0,0,0,0) 40%);background-size:4.1px 1.6px;"></div>
<div class="t" style="left:1809.8px;top:754.23px;font-size:14px;line-height:14px;color:#1c1e21;transform:scaleX(0.8482);transform-origin:left center;">[2]</div>
<div style="position:absolute;left:108px;top:825.61px;width:34.5px;height:34.5px;background:#fff;border:1.5px solid #ced0d4;border-radius:8px;box-sizing:border-box;"></div>
<div class="t" style="right:930.70px;top:820.18px;font-size:20px;line-height:20px;color:#1c1e21;transform:scaleX(0.9400);transform-origin:right center;">16.07</div>
<div class="t" style="right:722.60px;top:820.18px;font-size:20px;line-height:20px;color:#1c1e21;transform:scaleX(0.9400);transform-origin:right center;">142</div>
<div class="t" style="right:533.50px;top:820.18px;font-size:20px;line-height:20px;color:#1c1e21;transform:scaleX(0.9400);transform-origin:right center;">97</div>
<div style="position:absolute;left:1365.585px;top:838.3100000000001px;width:20.914999999999964px;height:1.6000000000000227px;background-image:linear-gradient(to right,#1c1e21 40%,rgba(0,0,0,0) 40%);background-size:4.1px 1.6px;"></div>
<div class="t" style="left:1392.8px;top:819.96px;font-size:14px;line-height:14px;color:#1c1e21;transform:scaleX(0.8482);transform-origin:left center;">[2]</div>
<div class="t" style="right:305.00px;top:820.18px;font-size:20px;line-height:20px;color:#1c1e21;transform:scaleX(0.9400);transform-origin:right center;">163</div>
<div class="t" style="right:116.70px;top:820.18px;font-size:20px;line-height:20px;color:#1c1e21;transform:scaleX(0.9400);transform-origin:right center;">5</div>
<div style="position:absolute;left:1792.8425px;top:838.3100000000001px;width:10.457499999999982px;height:1.6000000000000227px;background-image:linear-gradient(to right,#1c1e21 40%,rgba(0,0,0,0) 40%);background-size:4.1px 1.6px;"></div>
<div class="t" style="left:1809.8px;top:819.96px;font-size:14px;line-height:14px;color:#1c1e21;transform:scaleX(0.8482);transform-origin:left center;">[2]</div>
<div style="position:absolute;left:180px;top:354px;width:615px;height:508px;background:#e4e4e4;"></div>
<div style="position:absolute;left:281.5px;top:350px;width:1.0px;height:4px;background:#e4e6e9;"></div>
<div style="position:absolute;left:91px;top:860px;width:1761px;height:2px;background:#e4e6e9;box-shadow:0 -1px 2px rgba(0,0,0,0.06);"></div>
<div style="position:absolute;left:91px;top:862px;width:1761px;height:88px;background:#fff;"></div>
<div style="position:absolute;left:91px;top:949.5px;width:1761px;height:1.2999999999999545px;background:#e4e6e9;"></div>
<div style="position:absolute;left:281.9px;top:862px;width:1.0px;height:88px;background:#e4e6e9;"></div>
<div style="position:absolute;left:741px;top:862px;width:2px;height:88px;background:#dfe1e4;"></div>
<div style="position:absolute;left:743px;top:862px;width:4px;height:88px;background:linear-gradient(to right,rgba(0,0,0,0.06),rgba(0,0,0,0));"></div>
<div style="position:absolute;left:798.8px;top:862px;width:1.0px;height:88px;background:#e4e6e9;"></div>
<div style="position:absolute;left:1006.5px;top:862px;width:1.0px;height:88px;background:#e4e6e9;"></div>
<div style="position:absolute;left:1216.0px;top:862px;width:1.0px;height:88px;background:#e4e6e9;"></div>
<div style="position:absolute;left:1424.5px;top:862px;width:1.0px;height:88px;background:#e4e6e9;"></div>
<div style="position:absolute;left:1632.5px;top:862px;width:1.0px;height:88px;background:#e4e6e9;"></div>
<div style="position:absolute;left:1841.0px;top:862px;width:1.0px;height:88px;background:#e4e6e9;"></div>
<div class="t" style="left:301px;top:876.24px;font-size:19.8px;line-height:19.8px;font-weight:700;color:#1c1e21;transform:scaleX(0.9493);transform-origin:left center;">Results from 9 campaigns</div>
<svg style="position:absolute;left:540px;top:873px" width="20" height="20" viewBox="0 0 20 20"><circle cx="10" cy="10.5" r="8.4" fill="#1c1e21"/><rect x="9" y="9" width="2.1" height="6.5" fill="#fff"/><circle cx="10" cy="6.6" r="1.3" fill="#fff"/></svg>
<div class="t" style="left:301px;top:906.01px;font-size:17px;line-height:17px;color:#8a8d91;">Excludes deleted items</div>
<div style="position:absolute;left:743px;top:860px;width:56px;height:80px;overflow:hidden;">
<div class="t" style="right:10px;top:16.49px;font-size:19.5px;line-height:19.5px;font-weight:700;color:#1c1e21;">$1,609.48</div>
<div class="t" style="right:10px;top:45.61px;font-size:17px;line-height:17px;color:#8a8d91;">Spent</div>
</div>
<div class="t" style="right:921.75px;top:876.49px;font-size:19.5px;line-height:19.5px;font-weight:700;color:#1c1e21;letter-spacing:0.749px;">3.22</div>
<div class="t" style="right:922.73px;top:905.61px;font-size:17px;line-height:17px;color:#8a8d91;letter-spacing:-0.226px;">Per Person</div>
<div class="t" style="right:713.13px;top:876.49px;font-size:19.5px;line-height:19.5px;font-weight:700;color:#1c1e21;letter-spacing:0.372px;">10,408</div>
<div class="t" style="right:713.10px;top:905.61px;font-size:17px;line-height:17px;color:#8a8d91;letter-spacing:0.398px;">Total</div>
<div class="t" style="right:505.00px;top:876.49px;font-size:19.5px;line-height:19.5px;font-weight:700;color:#1c1e21;letter-spacing:0.301px;">7,319</div>
<div class="t" style="right:504.90px;top:905.61px;font-size:17px;line-height:17px;color:#8a8d91;letter-spacing:0.398px;">Total</div>
<div class="t" style="right:296.53px;top:876.49px;font-size:19.5px;line-height:19.5px;font-weight:700;color:#1c1e21;letter-spacing:0.472px;">12,336</div>
<div class="t" style="right:296.60px;top:905.61px;font-size:17px;line-height:17px;color:#8a8d91;letter-spacing:0.398px;">Total</div>
<div style="position:absolute;left:1817.5px;top:884.5px;width:14.299999999999955px;height:2.0px;background:#606770;"></div>
<div class="t" style="right:87.80px;top:905.61px;font-size:17px;line-height:17px;color:#8a8d91;letter-spacing:0.398px;">Total</div>
<div style="position:absolute;left:717px;top:956px;width:911.5px;height:10px;background:#c1c1c1;border-radius:5px;"></div>
<div style="position:absolute;left:1837px;top:355px;width:9px;height:427px;background:#c1c1c1;border-radius:5px;"></div>
<div style="position:absolute;left:1632.5px;top:278px;width:201.5px;height:580.2px;border:6px solid #f68b1f;border-radius:9px;box-sizing:border-box;"></div>
</body></html>
